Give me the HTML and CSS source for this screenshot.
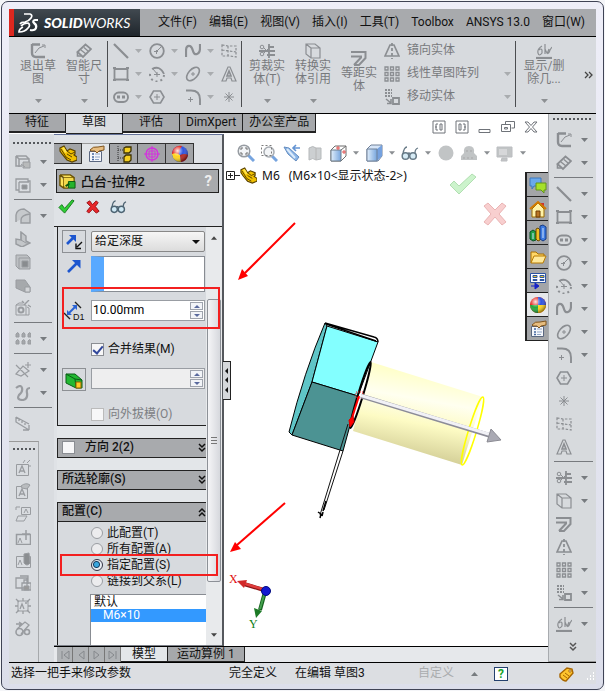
FILE: index.html
```html
<!DOCTYPE html>
<html lang="zh-CN">
<head>
<meta charset="utf-8">
<title>SolidWorks</title>
<link rel="stylesheet" href="styles.css">
</head>
<body>
<svg class="sprite" aria-hidden="true">
  <defs>
    <linearGradient id="gBody" x1="0.6" y1="0.05" x2="0.4" y2="0.95"><stop offset="0" stop-color="#ffffbe"/><stop offset="0.35" stop-color="#fffff0"/><stop offset="0.6" stop-color="#fdfbc4"/><stop offset="1" stop-color="#cfca92"/></linearGradient>
    <linearGradient id="gBlue" x1="0" y1="0" x2="1" y2="0"><stop offset="0" stop-color="#dcecfb"/><stop offset="1" stop-color="#5f96d8"/></linearGradient>
    <radialGradient id="gShine" cx="0.35" cy="0.3" r="0.7"><stop offset="0" stop-color="#fff" stop-opacity="0.9"/><stop offset="0.5" stop-color="#fff" stop-opacity="0"/><stop offset="1" stop-color="#000" stop-opacity="0.4"/></radialGradient>
  </defs>
  <symbol id="exit" viewBox="0 0 16 16"><path d="M2 1.500h8M2 1v9q0 4 4 4h9" stroke-width="2.400"/><path d="M5 10l4-5 5-2M12 2l3 0v3"/></symbol>
  <symbol id="dim" viewBox="0 0 16 16"><path d="M1.500 9l8-7.500L15 6l-8 8z" stroke-width="1.800"/><path d="M5 7l5 4M8 4.500l4 3.500" stroke-width="1.300"/><path d="M1.500 9v4h4" stroke-width="1.600"/></symbol>
  <symbol id="line" viewBox="0 0 16 16"><path d="M1 1l14 14" stroke-width="2.200"/></symbol>
  <symbol id="circle" viewBox="0 0 16 16"><circle cx="8" cy="8" r="6.800" stroke-width="1.800"/><path d="M7 9l5-5M5 8.500h4M7.500 7v4"/></symbol>
  <symbol id="spline" viewBox="0 0 16 16"><path d="M1 14V8q0-6 4-5 2 1 3 5t4 3q3-1 3-6V1" stroke-width="2.200"/></symbol>
  <symbol id="plane" viewBox="0 0 16 16"><path d="M1 2l6 1 8 0v11l-6-1H1zM7 3v10M1 7l14 2" stroke-dasharray="2.500 1.500" stroke-width="1.200"/></symbol>
  <symbol id="rect" viewBox="0 0 16 16"><path d="M1.500 3h13v10.500h-13z" stroke-width="1.800"/><path d="M0 2h3M13 2h3M0 14h3M13 14h3" stroke-width="2.200"/></symbol>
  <symbol id="arc" viewBox="0 0 16 16"><path d="M3 3q8-4 12 5" stroke-width="1.800"/><path d="M15 9a7 7 0 1 1-13-4" stroke-width="2" stroke-dasharray="2 3"/><path d="M4 3l5 6M5 8.500h6M8 6v5"/></symbol>
  <symbol id="ellipse" viewBox="0 0 16 16"><ellipse cx="8" cy="8" rx="8" ry="4.600" transform="rotate(-48 8 8)" stroke-width="1.600"/><path d="M6 8h4M8 6v4"/></symbol>
  <symbol id="text" viewBox="0 0 16 16"><path d="M1 15L7 1h2l6 14h-4l-1-3H6l-1 3z" stroke-width="1.200"/><path d="M8 5l-2 5h4z" stroke-width="1.600"/></symbol>
  <symbol id="slot" viewBox="0 0 16 16"><rect x="1" y="3.500" width="14" height="9.500" rx="4.700" stroke-width="1.900"/><rect x="4.500" y="7" width="2" height="2"/><rect x="9.500" y="7" width="2" height="2"/></symbol>
  <symbol id="poly" viewBox="0 0 16 16"><path d="M4.500 2h7L15 8l-3.500 6h-7L1 8z" stroke-width="1.600"/><path d="M5 8h6M8 5v6"/></symbol>
  <symbol id="fillet" viewBox="0 0 16 16"><path d="M1 1.500h5q9 0 9 9V16" stroke-width="1.900"/><path d="M3 10.500h5M5.500 8v5"/></symbol>
  <symbol id="point" viewBox="0 0 16 16"><path d="M8 3v10M3 8h10M4.500 4.500l7 7M11.500 4.500l-7 7"/></symbol>
  <symbol id="trim" viewBox="0 0 16 16"><path d="M10 1v14M0 8h16M8 12h8M9 4h6" stroke-width="1.800"/><circle cx="3" cy="4" r="1.800"/><circle cx="3" cy="11" r="1.800"/><path d="M5 5l5 5M5 10l5-5"/></symbol>
  <symbol id="convert" viewBox="0 0 16 16"><path d="M1 1h9l5 4v10H6L1 11zM6 5h9M6 5v10M1 1l5 4" stroke-width="1.200"/></symbol>
  <symbol id="offset" viewBox="0 0 16 16"><path d="M0 2h14.500v6L8 15H3" stroke-width="2"/><path d="M0 6.500h10v1L3 15" stroke-width="2"/></symbol>
  <symbol id="mirror" viewBox="0 0 16 16"><path d="M6 2L1 13h14L10 2z" stroke-width="1.700"/><path d="M8 0v16" stroke-width="1.800" stroke-dasharray="3 2"/></symbol>
  <symbol id="pattern" viewBox="0 0 16 16"><path d="M1 1h3v3h-3zM6.500 1h3v3h-3zM12 1h3v3h-3zM1 6.500h3v3h-3zM6.500 6.500h3v3h-3zM12 6.500h3v3h-3zM1 12h3v3h-3zM6.500 12h3v3h-3zM12 12h3v3h-3z" stroke-width="1.300"/></symbol>
  <symbol id="move" viewBox="0 0 16 16"><path d="M1 1h7M1 4h7M1 7h7" stroke-dasharray="2 1" stroke-width="1.800"/><path d="M9 9h6v6H9z" stroke-width="1.800"/><path d="M2 10l5 4M7 10v4.500H3" stroke-width="1.600"/></symbol>
  <symbol id="relation" viewBox="0 0 16 16"><path d="M0 15h16" stroke-width="2.200"/><path d="M6 3q-5 3-4 7t4 0V7q-1-2-3 0M9 1v10M9 6q3 8 5 1l2-3M11 11l2-5" stroke-width="1.200"/></symbol>
  <symbol id="boss" viewBox="0 0 16 16"><path d="M1 2h10l3 3M1 2v10h6M4 5h10v3M4 5v8M1 2l3 3" stroke-width="1.500"/><path d="M8 8h7v6H8zM6 10l4 3" fill="#b8babb"/></symbol>
  <symbol id="cut" viewBox="0 0 16 16"><path d="M1 2h12v2h2v11H4v-2H1zM4 5h10M4 5v10" stroke-width="1.300"/><path d="M7 8h5v4H7z" fill="#909396"/></symbol>
  <symbol id="round" viewBox="0 0 16 16"><path d="M1 14V7q1-6 8-6l6 4v10H6V12q0-5 9-6" stroke-width="1.400" fill="#c6c9cc"/></symbol>
  <symbol id="rib" viewBox="0 0 16 16"><path d="M6 1l5 4v5l4 2-8 4-6-3V8l5 1z" stroke-width="1.400" fill="#c3c6c9"/><path d="M6 1v8l5 3 4 0"/></symbol>
  <symbol id="shell" viewBox="0 0 16 16"><path d="M1 1h11l3 3v11H4l-3-3zM4 4h11M4 4v11" fill="#bdc0c3"/><path d="M7 7h6v6H7z" fill="#898c8f"/></symbol>
  <symbol id="draft" viewBox="0 0 16 16"><path d="M1 3h9l5 7v5H10L1 11z" fill="#a6a9ac"/><path d="M10 10h5v5h-5z" fill="#d3d5d8"/></symbol>
  <symbol id="wizard" viewBox="0 0 16 16"><path d="M1 5h10v10H1zM1 5l3-2h4M12 7l2 1v7h-3"/><circle cx="6" cy="10" r="2.500" stroke-width="2"/><path d="M9 5l5-5M13 5l3 2M7 1l2 2" stroke-width="1.400"/></symbol>
  <symbol id="dots" viewBox="0 0 16 16"><path d="M1 3q2-3 3 0v3H1zM7 3q2-3 3 0v3H7zM13 3q2-3 3 0v3h-3zM1 10q2-3 3 0v3H1zM7 10q2-3 3 0v3H7zM13 10q2-3 3 0v3h-3z" fill="#a5a8ab"/></symbol>
  <symbol id="refgeo" viewBox="0 0 16 16"><path d="M1 3l12 12M1 12l7-8 6 5-8 5zM13 0v6M10 3h6" stroke-width="1.200"/></symbol>
  <symbol id="curve" viewBox="0 0 16 16"><path d="M1 3q5-4 6 0t-3 7q-3 5 4 5 5-1 4-7-1-5 3-5" stroke-width="2.200"/></symbol>
  <symbol id="instant" viewBox="0 0 16 16"><path d="M1 1v5l13 8M14 14V9M14 14H8M1 1l13 7M4 3v2M7 5v2M10 7v2" stroke-width="1.300"/></symbol>
  <symbol id="note" viewBox="0 0 16 16"><path d="M1.500 4.500h12v11h-12z"/><path d="M4 13l3-7 3 7M5 11h4" stroke-width="1.300"/><path d="M8 3l2-3M12 3l3-3M13 6h3"/></symbol>
  <symbol id="noteh" viewBox="0 0 16 16"><path d="M1.500 3.500h11v12h-11z"/><path d="M4 13l3-7 3 7M5 11h4" stroke-width="1.300"/><path d="M6 3q5-4 9-1l-3 4-5-1z" fill="#b9bcbf"/></symbol>
  <symbol id="notef" viewBox="0 0 16 16"><path d="M6.500 1.500h9v7h-9zM1 4V1h4M1 15l2-5h9l-3 5z"/><path d="M9 7l2-4 2 4"/></symbol>
  <symbol id="notep" viewBox="0 0 16 16"><path d="M1.500 5.500h14v10h-14zM11 1v10M7 5h8" stroke-width="1.500"/><path d="M3 14l2-5 2 5"/></symbol>
  <symbol id="noteb" viewBox="0 0 16 16"><path d="M1.500 4.500h14v11h-14z"/><path d="M3 13l2-5 2 5"/><path d="M9 2l5-1 1 10q-3 4-6 0z" fill="#8b8e91"/></symbol>
  <symbol id="noted" viewBox="0 0 16 16"><path d="M1 3h11v10H1zM5 1h8v8M7 8h9v7H7zM9 8V5h4" stroke-width="1.300"/><path d="M9 11h5v4H9z" fill="#999"/></symbol>
  <symbol id="notes" viewBox="0 0 16 16"><path d="M3 3h10v10H3z"/><path d="M1 1l3 3M12 4l3-3M1 15l3-3M12 12l3 3M8 0v3M0 8h3M13 8h3M8 13v3M5 11l2-5 2 5M10 5h2" stroke-width="1.300"/></symbol>
  <symbol id="belt" viewBox="0 0 16 16"><circle cx="4.500" cy="11" r="3.500" stroke-width="1.600"/><circle cx="12" cy="11" r="2.500" stroke-width="1.600"/><path d="M2 8L10 1l4 3-8 9M1 3h5M4 1l3 2-3 2" stroke-width="1.300"/></symbol>
  <symbol id="part" viewBox="0 0 18 18"><path d="M1 3l4-2 3 5 3-2 5 2v3l-1 1 3 2v3l-5 2-5-2-5-6-2-3z" fill="#f0c000" stroke="#5b4300" stroke-width="1.200"/><path d="M2 4l5 8 5 3M8 6l4 3 4-2M8 9l5 3" stroke="#5b4300"/><path d="M3 3l2-1 3 5-2 1z" fill="#ffe44e"/></symbol>
  <symbol id="props" viewBox="0 0 18 18"><path d="M2.500 6.500h12v10h-12z" fill="#f4f6fb" stroke="#5a6780"/><path d="M5 9h2M5 12h2M5 14.500h2" stroke="#44679f" stroke-width="1.500"/><path d="M8 9h5M8 12h5M8 14.500h4" stroke="#8fa5c8"/><path d="M3 5q3-4 8-3l6-1v4l-5 1-2 2-2-2H4z" fill="#e7bd80" stroke="#80551f"/></symbol>
  <symbol id="config" viewBox="0 0 18 18"><path d="M3 1v15M3 5h6M3 13h6" stroke="#333" stroke-dasharray="1 1"/><path d="M9 3l2-1h5v4l-2 2H9zM9 12l2-2h5v5l-2 2H9z" fill="#f4cf21" stroke="#3e3200" stroke-width="1.300"/></symbol>
  <symbol id="target" viewBox="0 0 18 18"><circle cx="9" cy="9" r="6" stroke="#d62ee0" stroke-width="1.400"/><path d="M9 1v16M1 9h16M6 6h6v6H6z" stroke="#d62ee0"/></symbol>
  <symbol id="ball" viewBox="0 0 18 18"><circle cx="9" cy="9" r="8" fill="#e32219"/><path d="M9 1a8 8 0 0 1 8 8H9z" fill="#2f54e0"/><path d="M9 9h8a8 8 0 0 1-8 8z" fill="#ffd51c"/><path d="M9 9v8a8 8 0 0 1-8-8z" fill="#25a73b"/><circle cx="9" cy="9" r="8" fill="url(#gShine)"/></symbol>
  <symbol id="ball2" viewBox="0 0 18 18"><circle cx="9" cy="9" r="8" fill="#2f54e0"/><path d="M1 9a8 8 0 0 1 10-8Q7 6 8 10z" fill="#e32219"/><path d="M1 9q4-2 8 1l1 7q-8 0-9-8z" fill="#ffd51c"/><path d="M9 10q5-2 8 0-1 6-7 7z" fill="#b8281f"/><circle cx="9" cy="9" r="8" fill="url(#gShine)"/></symbol>
  <symbol id="glasses" viewBox="0 0 18 18"><circle cx="4.500" cy="12" r="3.300" fill="#cfe8f4" stroke="#4d6372" stroke-width="1.500"/><circle cx="12" cy="12" r="3.300" fill="#cfe8f4" stroke="#4d6372" stroke-width="1.500"/><path d="M2 10q1-7 4-7M14 9q0-4 3-5M7 10q1-2 2 0" stroke="#4d6372" stroke-width="1.300"/></symbol>
  <symbol id="caret" viewBox="0 0 7 4"><path d="M0 0h7L3.500 4z" fill="currentColor" stroke="none"/></symbol>
  <symbol id="down2" viewBox="0 0 8 10"><path d="M1 1l3 3 3-3M1 5l3 3 3-3" stroke="currentColor" stroke-width="1.500"/></symbol>
</svg>

<div class="window">
  <header class="titlebar">
    <div class="brand">
      <svg class="brand-mark" viewBox="0 0 21 20"><path d="M6 1h6q3 1 1 4-2 3-6 4-4 0-5 2M3 13q3-3 7-3 3 2 0 5-3 4-9 4 0-3 4-5" stroke="#fff" stroke-width="1.700"/><path d="M20 7h-3q-3 1-1 3 3 2 2 5-1 3-6 2" stroke="#fff" stroke-width="2.200"/></svg>
      <span class="brand-name"><b>SOLID</b>WORKS</span>
    </div>
    <nav class="menu">
      <a href="#">文件(F)</a><a href="#">编辑(E)</a><a href="#">视图(V)</a><a href="#">插入(I)</a><a href="#">工具(T)</a><a href="#">Toolbox</a><a href="#">ANSYS 13.0</a><a href="#">窗口(W)</a>
    </nav>
  </header>

  <div class="ribbon">
    <button class="big"><svg class="i"><use href="#exit"/></svg><span>退出草<br>图</span><svg class="car"><use href="#caret"/></svg></button>
    <button class="big"><svg class="i"><use href="#dim"/></svg><span>智能尺<br>寸</span><svg class="car"><use href="#caret"/></svg></button>
    <i class="vsep"></i>
    <div class="tools">
      <button aria-label="直线"><svg class="i"><use href="#line"/></svg><svg class="car"><use href="#caret"/></svg></button>
      <button aria-label="圆"><svg class="i"><use href="#circle"/></svg><svg class="car"><use href="#caret"/></svg></button>
      <button aria-label="样条曲线"><svg class="i"><use href="#spline"/></svg><svg class="car"><use href="#caret"/></svg></button>
      <button aria-label="基准面"><svg class="i"><use href="#plane"/></svg></button>
      <button aria-label="矩形"><svg class="i"><use href="#rect"/></svg><svg class="car"><use href="#caret"/></svg></button>
      <button aria-label="圆弧"><svg class="i"><use href="#arc"/></svg><svg class="car"><use href="#caret"/></svg></button>
      <button aria-label="椭圆"><svg class="i"><use href="#ellipse"/></svg><svg class="car"><use href="#caret"/></svg></button>
      <button aria-label="文字"><svg class="i"><use href="#text"/></svg></button>
      <button aria-label="槽口"><svg class="i"><use href="#slot"/></svg><svg class="car"><use href="#caret"/></svg></button>
      <button aria-label="多边形"><svg class="i"><use href="#poly"/></svg></button>
      <button aria-label="圆角"><svg class="i"><use href="#fillet"/></svg><svg class="car"><use href="#caret"/></svg></button>
      <button aria-label="点"><svg class="i"><use href="#point"/></svg></button>
    </div>
    <i class="vsep"></i>
    <button class="big"><svg class="i"><use href="#trim"/></svg><span>剪裁实<br>体(T)</span><svg class="car"><use href="#caret"/></svg></button>
    <button class="big"><svg class="i"><use href="#convert"/></svg><span>转换实<br>体引用</span><svg class="car"><use href="#caret"/></svg></button>
    <button class="big low"><svg class="i"><use href="#offset"/></svg><span>等距实<br>体</span></button>
    <div class="lines">
      <button><svg class="i"><use href="#mirror"/></svg><span>镜向实体</span></button>
      <button><svg class="i"><use href="#pattern"/></svg><span>线性草图阵列</span><svg class="car"><use href="#caret"/></svg></button>
      <button><svg class="i"><use href="#move"/></svg><span>移动实体</span><svg class="car"><use href="#caret"/></svg></button>
    </div>
    <i class="vsep"></i>
    <button class="big wide"><svg class="i"><use href="#relation"/></svg><span>显示/删<br>除几...</span><svg class="car"><use href="#caret"/></svg></button>
    <button class="more" aria-label="更多"><svg viewBox="0 0 10 8"><path d="M1 1l3 3-3 3M5 1l3 3-3 3" stroke="#444" stroke-width="1.300"/></svg></button>
  </div>

  <div class="main">
    <div class="work">
      <div class="tabrow">
        <nav class="tabs"><a href="#">特征</a><a href="#" class="on">草图</a><a href="#">评估</a><a href="#">DimXpert</a><a href="#">办公室产品</a></nav>
        <div class="winctl">
          <button aria-label="左窗格"><svg viewBox="0 0 14 14"><path d="M1 1h12v12H1zM6 4H4v6h2M3 7h2M8 4h2v6H8z"/></svg></button>
          <button aria-label="右窗格"><svg viewBox="0 0 14 14"><path d="M1 1h12v12H1zM8 4h2v6H8M9 7h2M4 4h2v6H4z"/></svg></button>
          <button aria-label="最小化"><svg viewBox="0 0 14 14"><path d="M1 9.500h11v3H1z"/></svg></button>
          <button aria-label="还原"><svg viewBox="0 0 14 14"><path d="M4.500 4V1.500h9v6.500h-3M.5 4.500h9v7h-9zM3.500 7.500h3v1.500h-3z"/></svg></button>
          <button aria-label="关闭"><svg viewBox="0 0 14 14"><path d="M1 2h3l3 3.500L10 2h3L8.500 7 13 12h-3L7 8.500 4 12H1l4.500-5z"/></svg></button>
        </div>
      </div>

      <div class="body">
        <aside class="leftbars">
          <div class="bar first">
            <i class="grip"></i>
            <button aria-label="拉伸凸台"><svg class="i"><use href="#boss"/></svg><svg class="car"><use href="#caret"/></svg></button>
            <button aria-label="拉伸切除"><svg class="i"><use href="#cut"/></svg><svg class="car"><use href="#caret"/></svg></button>
            <i class="hsep"></i>
            <button aria-label="圆角"><svg class="i"><use href="#round"/></svg><svg class="car"><use href="#caret"/></svg></button>
            <button aria-label="筋"><svg class="i"><use href="#rib"/></svg></button>
            <button aria-label="抽壳"><svg class="i"><use href="#shell"/></svg></button>
            <button aria-label="拔模"><svg class="i"><use href="#draft"/></svg></button>
            <button aria-label="异型孔"><svg class="i"><use href="#wizard"/></svg></button>
            <i class="hsep"></i>
            <button aria-label="阵列"><svg class="i"><use href="#dots"/></svg><svg class="car"><use href="#caret"/></svg></button>
            <i class="hsep"></i>
            <button aria-label="参考几何体"><svg class="i"><use href="#refgeo"/></svg><svg class="car"><use href="#caret"/></svg></button>
            <button aria-label="曲线"><svg class="i"><use href="#curve"/></svg><svg class="car"><use href="#caret"/></svg></button>
            <i class="hsep"></i>
            <button aria-label="Instant3D"><svg class="i"><use href="#instant"/></svg></button>
          </div>
          <div class="bar second">
            <i class="grip"></i>
            <button aria-label="新建块"><svg class="i"><use href="#note"/></svg></button>
            <button aria-label="编辑块"><svg class="i"><use href="#noteh"/></svg></button>
            <button aria-label="插入块"><svg class="i"><use href="#notef"/></svg></button>
            <button aria-label="添加"><svg class="i"><use href="#notep"/></svg></button>
            <button aria-label="重建"><svg class="i"><use href="#noteb"/></svg></button>
            <button aria-label="保存块"><svg class="i"><use href="#noted"/></svg></button>
            <button aria-label="爆炸块"><svg class="i"><use href="#notes"/></svg></button>
            <button aria-label="皮带"><svg class="i"><use href="#belt"/></svg></button>
          </div>
        </aside>

        <div class="center">
          <div class="split">
            <section class="panel">
              <div class="ptabs">
                <button aria-label="特征树"><svg><use href="#part"/></svg></button>
                <button class="on" aria-label="属性"><svg><use href="#props"/></svg></button>
                <button aria-label="配置"><svg><use href="#config"/></svg></button>
                <button aria-label="尺寸专家"><svg><use href="#target"/></svg></button>
                <button aria-label="显示"><svg><use href="#ball2"/></svg></button>
              </div>
              <h1 class="ptitle">
                <svg viewBox="0 0 18 18"><path d="M1 2h11l4 3v4M1 2v11l4 3h5M5 5h11M5 5v11M1 2l4 3" fill="#ffe45a" stroke="#6b5200" stroke-width="1.500"/><path d="M5 5h10v9H5z" fill="#f4d84a"/><path d="M10 9h7v7h-7z" fill="#26b32b" stroke="#0b5a10"/><path d="M7 14l4-3" stroke="#0b5a10" stroke-width="2"/></svg>
                <span>凸台-拉伸2</span><b>?</b>
              </h1>
              <div class="pactions">
                <button aria-label="确定"><svg viewBox="0 0 18 18"><path d="M1 10l3-3 3 4 8-9 2 1L7 16z" fill="#2fce35" stroke="#14791a"/></svg></button>
                <button aria-label="取消"><svg viewBox="0 0 18 18"><path d="M3 5l3-2 3 4 4-4 2 2-3 4 4 5-3 2-4-4-4 4-2-2 4-5z" fill="#e8262a" stroke="#971014"/></svg></button>
                <button aria-label="预览"><svg><use href="#glasses"/></svg></button>
              </div>
              <div class="pscroll">
                <div class="groups">
                  <div class="group">
                    <div class="row r1">
                      <button class="sq" aria-label="反向"><svg viewBox="0 0 18 18"><path d="M2 11l6-6" stroke="#1d56cf" stroke-width="2.600"/><path d="M4 2h7v7z" fill="#1d56cf"/><path d="M17 9l-5 5M11 10.500v5h5" stroke="#111" stroke-width="1.400"/></svg></button>
                      <select aria-label="终止条件"><option>给定深度</option></select>
                    </div>
                    <div class="row r2">
                      <span class="sym"><svg viewBox="0 0 18 18"><path d="M3 15L12 6" stroke="#1d56cf" stroke-width="2.600"/><path d="M7 3h8.500v8.500z" fill="#1d56cf"/></svg></span>
                      <div class="pick"></div>
                    </div>
                    <div class="row r3">
                      <label class="sym" for="depth"><svg class="d1" viewBox="0 0 20 20"><path d="M6 12l6-6" stroke="#2a62d4" stroke-width="2"/><path d="M4 9v5h5zM9 4h5v5z" fill="#2a62d4"/><path d="M1 12l6 6M12 1l6 6" stroke="#222" stroke-width="1.400"/></svg><small>D1</small></label>
                      <span class="spin"><input id="depth" type="text" value="10.00mm"><span class="ud"><i></i><i></i></span></span>
                      <i class="mark"></i>
                    </div>
                    <label class="row chk r4"><input type="checkbox" checked><span>合并结果(M)</span></label>
                    <div class="row r5">
                      <button class="sq" aria-label="拔模开关"><svg viewBox="0 0 18 18"><path d="M1 3h9l7 6v8h-6L1 12z" fill="#22b832" stroke="#0a5f16"/><path d="M1 3l9 5 7 1M10 8l1 9" stroke="#0a5f16"/><path d="M11 11h5v6h-5z" fill="#ffc928" stroke="#8d6400"/></svg></button>
                      <span class="spin off"><input type="text" disabled aria-label="拔模角度"><span class="ud"><i></i><i></i></span></span>
                    </div>
                    <label class="row chk r6 dim"><input type="checkbox" disabled><span>向外拔模(O)</span></label>
                  </div>
                  <div class="head"><input type="checkbox" id="dir2"><label for="dir2">方向 2(2)</label><svg><use href="#down2"/></svg></div>
                  <div class="head"><span>所选轮廓(S)</span><svg><use href="#down2"/></svg></div>
                  <div class="head last"><span>配置(C)</span><svg class="up"><use href="#down2"/></svg></div>
                  <div class="group radios">
                    <label><input type="radio" name="cfg"><span>此配置(T)</span></label>
                    <label><input type="radio" name="cfg"><span>所有配置(A)</span></label>
                    <label><input type="radio" name="cfg" checked><span>指定配置(S)</span><i class="mark"></i></label>
                    <label><input type="radio" name="cfg"><span>链接到父系(L)</span></label>
                    <ul class="list"><li>默认</li><li class="sel">M6×10</li></ul>
                  </div>
                </div>
                <div class="scroll"><svg class="up"><use href="#caret"/></svg><i class="thumb"></i><svg><use href="#caret"/></svg></div>
              </div>
              <button class="handle" aria-label="折叠面板"><i></i><i></i><i></i></button>
            </section>

            <section class="view">
              <div class="hud">
                <svg viewBox="0 0 18 18"><path d="M11 11l6 6" stroke="#5f95da" stroke-width="3"/><circle cx="7" cy="7" r="5.800" fill="#f2f4f6" stroke="#858b92" stroke-width="1.500"/><path d="M4 6V4h2M8 4h2v2M10 8v2H8M6 10H4V8" stroke="#555"/></svg>
                <svg viewBox="0 0 18 18"><path d="M12 12l5 5" stroke="#5f95da" stroke-width="3"/><circle cx="9" cy="8" r="5" fill="#f2f4f6" stroke="#999ea5" stroke-width="1.500"/><path d="M1.500 1.500h10v10h-10z" stroke="#666" stroke-dasharray="2 2"/></svg>
                <svg viewBox="0 0 18 18"><path d="M1 3l5 1 10 9-3 4-8-7z" fill="#78aae4" stroke="#4a79b5"/><path d="M10 4h7M13 1l-3 3 3 3" stroke="#4a82cc" stroke-width="1.600"/><path d="M4 5l8 9" stroke="#d6e8fa" stroke-width="2"/></svg>
                <svg viewBox="0 0 18 18"><path d="M3 4q4-3 7 0h5v11l-5 1q-3-3-7 0z" fill="#c4c7c9" stroke="#aaaeb1"/><path d="M10 4v12" stroke="#aaa"/></svg>
                <svg viewBox="0 0 18 18"><path d="M2 6l4-4h11v10l-5 5H2z" fill="#fff" stroke="#555"/><path d="M2 6h10v11H2z" fill="url(#gBlue)" stroke="#567"/><path d="M12 6l5-4" stroke="#555"/><path d="M9 2v4M7 4h4M15 6v4M13 8h4" stroke="#d33"/></svg>
                <svg class="car"><use href="#caret"/></svg>
                <svg viewBox="0 0 18 18"><path d="M2 5l4-4h11v11l-4 5H2z" fill="#cfe1f7" stroke="#596c88"/><path d="M12 5l5-4v11l-5 5z" fill="#5d91da"/><path d="M2 5h10v12H2z" fill="url(#gBlue)" stroke="#596c88"/></svg>
                <svg class="car"><use href="#caret"/></svg>
                <svg><use href="#glasses"/></svg>
                <svg class="car"><use href="#caret"/></svg>
                <svg viewBox="0 0 18 18"><circle cx="9" cy="9" r="7.500" fill="#b7babc"/></svg>
                <svg viewBox="0 0 18 18"><path d="M4 9q-1-7 5-7t5 7l3 3v4H1v-4z" fill="#b7babc"/><path d="M3 14h12M6 7h6" stroke="#999" stroke-dasharray="2 2"/></svg>
                <svg class="car"><use href="#caret"/></svg>
                <svg viewBox="0 0 18 18"><path d="M1 3h15v10H1zM6 14h5v3H5z" fill="#b7babc" stroke="#b0b3b6"/><path d="M3 5h8v6H3z" fill="#cfd1d3"/></svg>
                <svg class="car"><use href="#caret"/></svg>
              </div>
              <div class="tree"><svg class="plus" viewBox="0 0 14 9"><path d="M.5.5h8v8h-8zM2 4.500h5M4.500 2v5M9 4.500h5" stroke="#222"/></svg><svg class="pi"><use href="#part"/></svg><span>M6</span><span class="cfgname">(M6×10&lt;显示状态-2&gt;)</span></div>

              <svg class="model" width="325" height="514" viewBox="224 134 325 514">
                <path d="M450 185l4-4 5 5 13-12 4 3-17 17z" fill="#ccf3cc" stroke="#b1dfb1"/>
                <path d="M484 206l4-3 7 7 7-7 4 3-7 8 7 8-4 3-7-8-7 8-4-3 7-8z" fill="#f8cfcf" stroke="#eab4b4"/>
                <path d="M371 362L483 397 462 465 353 431z" fill="url(#gBody)" stroke="none"/>
                <ellipse cx="472.500" cy="431" rx="4" ry="35.500" transform="rotate(17 472.500 431)" stroke="#ff0" stroke-width="1.500"/>
                <path d="M325 323Q304 372 289 432L292 435 312 382 327 326z" fill="#5fc5c7" stroke="#000"/>
                <path d="M327 326L378 342 358 396 312 382z" fill="#83ffff" stroke="#000"/>
                <path d="M312 382L358 396 343 451 292 435z" fill="#4c9393" stroke="#000"/>
                <path d="M325 323L374 337Q378 338 378 342M326 324L376 341" stroke="#000" stroke-width="1.500"/>
                <ellipse cx="360.500" cy="395" rx="2.500" ry="34.500" transform="rotate(17 360.500 395)" stroke="#000" stroke-width="2"/>
                <path d="M348 424L320 515M343 451L324 510" stroke="#111"/>
                <path d="M326 501L323 511M318 512L321 514 320 518M323 512L322 516" stroke="#000" stroke-width="1.500"/>
                <path d="M359 396L352 418" stroke="#f00" stroke-width="2"/><path d="M353 416l-4 4 1 7 4-5z" fill="#f00" stroke="#d00"/>
                <path d="M356 392h7v6h-7z" stroke="#f22" stroke-dasharray="1 1"/>
                <path d="M361 396L490 435.500" stroke="#8c8c98" stroke-width="4.500"/><path d="M361 395.500L490 434.500" stroke="#f1f1f6" stroke-width="3"/>
                <path d="M491 429l10 11-14 2z" fill="#aaaab4" stroke="#8b8b93"/>
                <path d="M295 223L245 273" stroke="#f00" stroke-width="2"/><path d="M238 280l4-11 6 7z" fill="#f00" stroke="none"/>
                <path d="M285 503L237 545" stroke="#f00" stroke-width="2"/><path d="M230 552l5-10 6 7z" fill="#f00" stroke="none"/>
                <path d="M264 590L244 584" stroke="#8a1414" stroke-width="4"/><path d="M264 589.500L244 583.500" stroke="#e03c3c" stroke-width="2.500"/><path d="M237 581l10-1-3 8z" fill="#d22828" stroke="none"/>
                <path d="M265 592L260 610" stroke="#14601c" stroke-width="4"/><path d="M265 592L260 609" stroke="#45a14e" stroke-width="2"/><path d="M256 618l-2-10 8 3z" fill="#1c7a26" stroke="none"/>
                <circle cx="266" cy="591" r="4.500" fill="#1319d0" stroke="#000a80"/>
                <text x="229" y="583" fill="#e01010">X</text><text x="249" y="628" fill="#0d7d16">Y</text>
              </svg>

              <nav class="taskpane">
                <button aria-label="资源"><svg viewBox="0 0 18 18"><path d="M1 2h11v8H5l-2 3v-3H1z" fill="#6aa9ec" stroke="#3d79bd"/><path d="M7 7h10v7h-2v3l-3-3H7z" fill="#a6e02a" stroke="#63951a"/></svg></button>
                <button aria-label="主页"><svg viewBox="0 0 18 18"><path d="M12 3h3v5h-3z" fill="#c33"/><path d="M3 9l6-6 6 6v8H3z" fill="#fff3a8" stroke="#9b6a00"/><path d="M1 9l8-7 8 7" stroke="#d27b00" stroke-width="2"/><path d="M7 11h4v6H7z" fill="#b87524" stroke="#703c00"/></svg></button>
                <button aria-label="设计库"><svg viewBox="0 0 18 18"><path d="M1 8l3-2 3 2v8l-3 1-3-2z" fill="#22a04a" stroke="#0b5424"/><path d="M7 5l2-1 2 2v10l-2 1-2-2z" fill="#f3bd1f" stroke="#6c4b00"/><path d="M11 2l3-1 3 2v12l-3 2-3-2z" fill="#3d7ae0" stroke="#173c86"/><path d="M4 9v6M14 4v10" stroke="#cfe4ff"/></svg></button>
                <button aria-label="文件"><svg viewBox="0 0 18 18"><path d="M2 15V4h5l2 2h6v3" fill="#ffd768" stroke="#a86f00"/><path d="M2 15l3-7h12l-3 7z" fill="#ffe99a" stroke="#b87a00"/></svg></button>
                <button aria-label="视图调色板"><svg viewBox="0 0 18 18"><path d="M1.500 1.500h15v9h-15z" fill="#fff" stroke="#2d54a0"/><path d="M4 3.500h4v2H4zM11 3.500h4v2h-4zM4 7.500h4v1H4zM11 7.500h4v1h-4z" fill="#e9c928" stroke="#2d54a0"/><path d="M2 14h5M6 11l4 3-4 3z" fill="#1522c8" stroke="#1522c8"/></svg></button>
                <button class="on" aria-label="外观"><svg><use href="#ball"/></svg></button>
                <button aria-label="自定义属性"><svg><use href="#props"/></svg></button>
              </nav>
            </section>
          </div>
          <div class="sheets">
            <button aria-label="最前"><svg viewBox="0 0 10 10"><path d="M2 1v8M9 1v8L4 5z"/></svg></button><button aria-label="上一个"><svg viewBox="0 0 10 10"><path d="M8 1v8L3 5z"/></svg></button><button aria-label="下一个"><svg viewBox="0 0 10 10"><path d="M2 1v8l5-4z"/></svg></button><button aria-label="最后"><svg viewBox="0 0 10 10"><path d="M8 1v8M1 1v8l5-4z"/></svg></button>
            <a href="#" class="on">模型</a><a href="#">运动算例 1</a>
          </div>
        </div>
      </div>
    </div>

    <aside class="bar right">
      <i class="grip"></i>
      <button aria-label="退出草图"><svg class="i"><use href="#exit"/></svg><svg class="car"><use href="#caret"/></svg></button>
      <button aria-label="智能尺寸"><svg class="i"><use href="#dim"/></svg><svg class="car"><use href="#caret"/></svg></button>
      <i class="hsep"></i>
      <button aria-label="直线"><svg class="i"><use href="#line"/></svg><svg class="car"><use href="#caret"/></svg></button>
      <button aria-label="矩形"><svg class="i"><use href="#rect"/></svg><svg class="car"><use href="#caret"/></svg></button>
      <button aria-label="槽口"><svg class="i"><use href="#slot"/></svg><svg class="car"><use href="#caret"/></svg></button>
      <button aria-label="圆"><svg class="i"><use href="#circle"/></svg><svg class="car"><use href="#caret"/></svg></button>
      <button aria-label="圆弧"><svg class="i"><use href="#arc"/></svg><svg class="car"><use href="#caret"/></svg></button>
      <button aria-label="样条曲线"><svg class="i"><use href="#spline"/></svg><svg class="car"><use href="#caret"/></svg></button>
      <button aria-label="椭圆"><svg class="i"><use href="#ellipse"/></svg><svg class="car"><use href="#caret"/></svg></button>
      <button aria-label="圆角"><svg class="i"><use href="#fillet"/></svg><svg class="car"><use href="#caret"/></svg></button>
      <button aria-label="多边形"><svg class="i"><use href="#poly"/></svg></button>
      <button aria-label="点"><svg class="i"><use href="#point"/></svg></button>
      <button aria-label="基准面"><svg class="i"><use href="#plane"/></svg></button>
      <button aria-label="文字"><svg class="i"><use href="#text"/></svg></button>
      <i class="hsep"></i>
      <button aria-label="剪裁"><svg class="i"><use href="#trim"/></svg><svg class="car"><use href="#caret"/></svg></button>
      <button aria-label="转换"><svg class="i"><use href="#convert"/></svg><svg class="car"><use href="#caret"/></svg></button>
      <button aria-label="等距"><svg class="i"><use href="#offset"/></svg></button>
      <button aria-label="镜向"><svg class="i"><use href="#mirror"/></svg></button>
      <button aria-label="阵列"><svg class="i"><use href="#pattern"/></svg><svg class="car"><use href="#caret"/></svg></button>
      <button aria-label="移动"><svg class="i"><use href="#move"/></svg><svg class="car"><use href="#caret"/></svg></button>
      <i class="hsep"></i>
      <button aria-label="几何关系"><svg class="i"><use href="#relation"/></svg><svg class="car"><use href="#caret"/></svg></button>
      <button class="chev" aria-label="更多"><svg><use href="#down2"/></svg></button>
    </aside>
  </div>

  <footer class="status">
    <span class="s1">选择一把手来修改参数</span><span class="s2">完全定义</span><span class="s3">在编辑 草图3</span><span class="s4">自定义</span>
    <svg class="car up"><use href="#caret"/></svg>
    <button class="help" aria-label="帮助">?</button>
    <svg class="tag" viewBox="0 0 16 16"><path d="M2 8l7-6 5 1 1 4-7 8q-3 0-6-4z" fill="#ffc42e" stroke="#a86600" stroke-width="1.400"/><circle cx="12" cy="5" r="1.200" fill="#fff" stroke="#a86600"/><path d="M5 9l4 3M7 7l4 3" stroke="#a86600"/></svg>
    <svg class="resize" viewBox="0 0 8 8"><path d="M1 7h1M4 7h1M7 7h1M4 4h1M7 4h1M7 1h1" stroke="#fff" stroke-width="2"/></svg>
  </footer>
</div>
</body>
</html>
```
FILE: styles.css
```css
* { box-sizing: border-box; }
body {
  margin: 0;
  padding: 1px;
  background: #f4f5f8;
  color: #111;
  font: 12px/13px Roboto, "Noto Sans CJK SC", sans-serif;
}
button { margin: 0; padding: 0; border: 0; background: none; font: inherit; color: inherit; }
a { color: inherit; text-decoration: none; }
svg { display: block; fill: none; stroke: none; flex: none; }
.sprite { position: absolute; width: 0; height: 0; }
.i { width: 16px; height: 16px; stroke: #8b8e92; }
.car { width: 7px; height: 4px; color: #777b7f; }
.up { transform: rotate(180deg); }

.window {
  display: flex;
  flex-direction: column;
  min-height: calc(100vh - 2px);
  padding: 7px 7px 5px;
  border: 1px solid #3f4355;
  border-radius: 7px;
  background: linear-gradient(#eeeef8, #dcdeea);
}

/* title bar */
.titlebar { display: flex; height: 28px; background: #a8aaad; border-bottom: 1px solid #000; }
.brand {
  display: flex; align-items: center; gap: 5px;
  width: 131px; padding-left: 4px;
  border-left: 5px solid #dc281f;
  background: linear-gradient(#414950, #1f262c);
}
.brand-mark { width: 21px; height: 20px; }
.brand-name { color: #fff; font: italic 14px/16px Lato, sans-serif; }
.brand-name b { font-weight: 900; }
.menu { flex: 1; display: flex; justify-content: space-between; align-items: center; padding: 0 11px 0 18px; }

/* ribbon */
.ribbon { display: flex; height: 77px; padding-left: 6px; background: #d7dade; border-bottom: 1px solid #000; color: #77797c; }
.big { position: relative; display: flex; flex-direction: column; align-items: center; gap: 1px; width: 46px; padding-top: 6px; }
.big .car { position: absolute; bottom: 10px; color: #8d9093; }
.big.low { padding-top: 13px; }
.big.wide { width: 56px; }
.vsep { width: 1px; height: 66px; margin-top: 4px; background: #4b4d50; }
.tools { display: grid; grid-template-columns: 36px 36px 36px 20px; grid-auto-rows: 23px; padding: 2px 0 0 5px; }
.tools button { display: flex; align-items: center; gap: 6px; }
.tools .car, .lines .car { color: #a9acaf; }
.tools + .vsep { margin-right: 2px; }
.lines { flex: 1; padding: 2px 4px 0 2px; }
.lines button { display: flex; align-items: center; gap: 7px; width: 100%; height: 23px; }
.lines .car { margin-left: auto; }
.more { flex: 1; display: flex; align-items: center; justify-content: flex-end; max-width: 24px; padding-right: 2px; }
.more svg { width: 10px; height: 8px; }

/* work area */
.main { flex: 1; display: flex; }
.work { flex: 1; display: flex; flex-direction: column; min-width: 0; background: #fff; }
.tabrow { display: flex; height: 20px; justify-content: space-between; }
.tabs { display: flex; height: 19px; }
.tabs a {
  padding: 0 6px; min-width: 57px; text-align: center; line-height: 16px;
  border: solid #222; border-width: 0 1px 2px 0; background: #a6a8ab;
}
.tabs a.on { height: 21px; background: #dadde1; }
.winctl { display: flex; gap: 9px; align-items: flex-end; padding-right: 10px; }
.winctl svg { width: 14px; height: 14px; stroke: #6f7379; }

.body { flex: 1; display: flex; }
.leftbars { display: flex; flex-direction: column; width: 45px; background: #d9dce0; }
.bar { display: flex; flex-direction: column; }
.bar button { display: flex; align-items: center; gap: 9px; height: 23px; }
.grip { height: 16px; margin: 0 3px 0 4px; background: repeating-linear-gradient(90deg, #55585c 0 2px, transparent 2px 4px) 0 8px / 100% 2px no-repeat; }
.hsep { height: 8px; margin: 0 2px 0 5px; background: linear-gradient(#777a7e, #777a7e) 0 3px / 100% 1px no-repeat; }
.first { padding: 0 0 6px; }
.leftbars button { padding-left: 6px; }
.leftbars .i { stroke: #999ca0; }
.second { flex: 1; width: 30px; border-top: 1px solid #999; border-right: 1px solid #a6a9ac; }
.second .grip { height: 14px; background-position-y: 6px; }
.right { width: 48px; background: #d7dadd; border-left: 1px solid #a8abaf; border-bottom: 1px solid #999; }
.right .grip { height: 14px; background-position-y: 4px; }
.right button { padding-left: 7px; }
.right .hsep { margin-right: 3px; }
.right .chev { justify-content: center; color: #555; padding: 0; }
.chev svg { width: 8px; height: 10px; }

.center { flex: 1; display: flex; flex-direction: column; min-width: 0; }
.split { flex: 1; display: flex; border-bottom: 1px solid #000; }

/* property panel */
.panel { position: relative; display: flex; flex-direction: column; width: 170px; background: #dfe2e6; border-top: 1px solid #65739a; border-right: 2px solid #55585d; }
.ptabs { display: flex; height: 29px; padding-top: 8px; border-bottom: 1px solid #222; }
.ptabs button { display: flex; align-items: center; justify-content: center; width: 28px; height: 21px; border: 1px solid #333; border-left-width: 0; background: #a2a4a7; }
.ptabs button.on { background: #e2e5e8; border-top-color: #999; border-bottom-color: #e2e5e8; }
.ptabs svg { width: 18px; height: 18px; }
.ptitle {
  display: flex; align-items: center; gap: 5px; height: 24px; margin: 5px 3px 0 2px; padding: 0 6px 0 2px;
  border: 1px solid #222; background: #a8aaad; font-size: 13px; font-weight: 500;
}
.ptitle svg { width: 17px; height: 17px; }
.ptitle b { margin-left: auto; color: #eee; font-size: 15px; }
.pactions { display: flex; align-items: flex-start; gap: 9px; height: 34px; padding: 5px 0 0 4px; border-bottom: 1px solid #222; }
.pactions svg { width: 17px; height: 17px; }
.pscroll { flex: 1; display: flex; padding-left: 3px; border-bottom: 1px solid #7c8088; }
.groups { flex: 1; display: flex; flex-direction: column; min-width: 0; background: #e3e6e9; }
.group { padding-left: 4px; border: solid #222; border-width: 0 0 1px 1px; background: #d7dade; }
.row { position: relative; display: flex; }
.sq { display: flex; align-items: center; justify-content: center; width: 24px; height: 23px; border: 1px solid #8d9094; }
.sq svg { width: 18px; height: 18px; }
.sym { position: relative; width: 24px; padding: 1px 3px; }
.sym svg { width: 18px; height: 18px; }
.sym .d1 { width: 20px; height: 20px; margin-left: -2px; }
.sym small { position: absolute; left: 11px; top: 13px; font: 9px/9px "Liberation Sans", sans-serif; }
.r1 { padding-top: 3px; }
.r2 { padding-top: 3px; }
.r3 { padding-top: 8px; }
.r1 select {
  flex: 1; min-width: 0; height: 21px; margin: 1px 1px 0 5px; padding: 0 3px;
  border: 1px solid #888; border-radius: 2px; appearance: none; font: inherit; color: #111;
  background: linear-gradient(#f6f6f6, #dcdcdc);
}
.r1::after { content: ""; position: absolute; right: 6px; top: 13px; border: solid transparent; border-width: 4px 4px 0; border-top-color: #111; }
.pick { flex: 1; height: 36px; margin: 0 1px 0 5px; border: 1px solid #888c92; border-left: 13px solid #58a9ff; background: #fff; }
.spin { flex: 1; display: flex; min-width: 0; height: 21px; margin: 0 1px 0 5px; border: 1px solid #999da3; background: #fff; }
.spin input { flex: 1; width: 0; min-width: 0; padding: 0 0 0 1px; border: 0; background: none; font: inherit; color: #000; }
.spin.off { background: #eeeeef; }
.ud { display: grid; gap: 1px; width: 15px; padding: 1px; }
.ud i { display: grid; place-items: center; border: 1px solid #9ea3ad; background: #f2f4f8; }
.ud i::after { content: ""; border: solid transparent; border-width: 0 3px 3px; border-bottom-color: #5a6a9e; }
.ud i + i::after { border-width: 3px 3px 0; border-top-color: #5a6a9e; }
.mark { position: absolute; z-index: 2; border: 2px solid #f32020; pointer-events: none; }
.r3 .mark { left: 0; right: -14px; top: -5px; height: 42px; }
.chk { align-items: center; gap: 4px; padding-left: 29px; }
input[type=checkbox] { appearance: none; width: 13px; height: 13px; margin: 0; border: 1px solid #8b8e93; background: #f7f7f8; }
.chk input:checked { display: grid; place-items: center; }
.chk input:checked::after { content: ""; width: 4px; height: 8px; margin-top: -2px; border: solid #31479a; border-width: 0 2px 2px 0; transform: rotate(40deg); }
.r4 { height: 46px; padding-top: 9px; }
.r5 { height: 22px; }
.r6 { height: 35px; padding-top: 13px; }
.dim { color: #7d8084; }
.dim input { border-color: #bbb; }
.head {
  display: flex; align-items: center; gap: 10px; height: 20px; margin-top: 12px; padding: 0 0 1px 4px;
  border: 1px solid #222; border-right: 0; background: #a8aaad; font-weight: 500;
}
.head svg { width: 8px; height: 10px; margin-left: auto; color: #111; }
.radios { flex: 1; padding: 3px 0 0 32px; border-bottom: 0; }
.radios label { position: relative; display: flex; align-items: center; gap: 4px; height: 16px; padding-left: 1px; }
.radios .mark { left: -30px; right: -12px; top: -3px; height: 22px; }
input[type=radio] { appearance: none; width: 12px; height: 12px; margin: 0; border: 1px solid #9a9da2; border-radius: 50%; background: #ececee; }
input[type=radio]:checked { border-color: #334; background: radial-gradient(circle at 45% 45%, #3aa6dd 0 2px, #123f66 3px, #e9edf2 4px); }
.list { height: 51px; margin: 5px 0 0; padding: 1px 0 0; border: solid #888c92; border-width: 1px 0 0 1px; background: #fff; list-style: none; }
.list li { padding-left: 3px; line-height: 13px; }
.list .sel { padding-left: 12px; background: #3399ff; color: #fff; }
.scroll { display: flex; flex-direction: column; align-items: center; width: 16px; padding: 9px 0 8px; background: #e8eaec; }
.scroll svg { width: 6px; height: 4px; color: #444; }
.thumb { display: grid; place-items: center; width: 14px; height: 283px; margin: 59px 0 auto; border: 1px solid #8d9197; border-radius: 2px; background: linear-gradient(90deg, #f5f5f7, #d6d8dd); }
.thumb::after { content: ""; width: 6px; height: 8px; background: repeating-linear-gradient(#777 0 1px, transparent 1px 3px); }
.handle { position: absolute; right: -9px; top: 226px; z-index: 2; display: grid; place-items: center; width: 8px; height: 39px; padding: 4px 0; border: 1px solid #222; border-left: 0; background: #d5d8db; }
.handle i { border: solid transparent; border-width: 3px 3px 3px 0; border-right-color: #111; }

/* graphics view */
.view { position: relative; flex: 1; min-width: 0; }
.hud { display: flex; align-items: center; gap: 5px; padding: 10px 0 0 13px; opacity: 0.85; }
.hud svg { width: 18px; height: 18px; }
.hud .car { width: 6px; height: 4px; margin: 0 1px; }
.tree { display: flex; align-items: center; padding: 5px 0 0 2px; font: 12px/17px "Noto Sans", "Noto Sans CJK SC", sans-serif; }
.plus { width: 14px; height: 9px; }
.pi { width: 17px; height: 17px; margin-right: 5px; }
.cfgname { margin-left: 9px; }
.model { position: absolute; left: 0; top: 0; pointer-events: none; }
.model text { font: 12px "Liberation Serif", serif; }
.taskpane { position: absolute; right: 0; top: 38px; width: 23px; border: solid #222; border-width: 1px 0 0 2px; }
.taskpane button { display: flex; align-items: center; justify-content: center; width: 100%; height: 24px; border-bottom: 1px solid #222; background: #a3a5a8; }
.taskpane .on { background: #e6e8ea; }
.taskpane svg { width: 18px; height: 18px; }

.sheets { display: flex; height: 15px; padding-left: 3px; background: #e6e8eb; }
.sheets button { display: grid; place-items: center; width: 16px; border-right: 1px solid #777; background: #b0b3b6; }
.sheets svg { width: 10px; height: 10px; stroke: #85888c; }
.sheets a { padding: 0 9px; line-height: 14px; border: solid #222; border-width: 0 1px 1px 0; background: #a6a8ab; }
.sheets a.on { padding: 0 11px; background: #e3e6e9; }

/* status bar */
.status { display: flex; align-items: center; height: 22px; padding-left: 2px; border-top: 1px solid #000; background: #dcdee2; }
.s1 { flex: 0 1 218px; }
.s2 { margin-right: 18px; }
.s3 { flex: 0 1 123px; }
.s4 { margin-right: 17px; color: #aaacae; }
.help { width: 14px; height: 14px; margin: 0 50px 0 16px; border: 1px solid #24406e; background: #fff; color: #18a32a; font-weight: 700; line-height: 12px; }
.tag { width: 16px; height: 16px; }
.resize { width: 8px; height: 8px; margin: 4px 2px 0 auto; }
```
